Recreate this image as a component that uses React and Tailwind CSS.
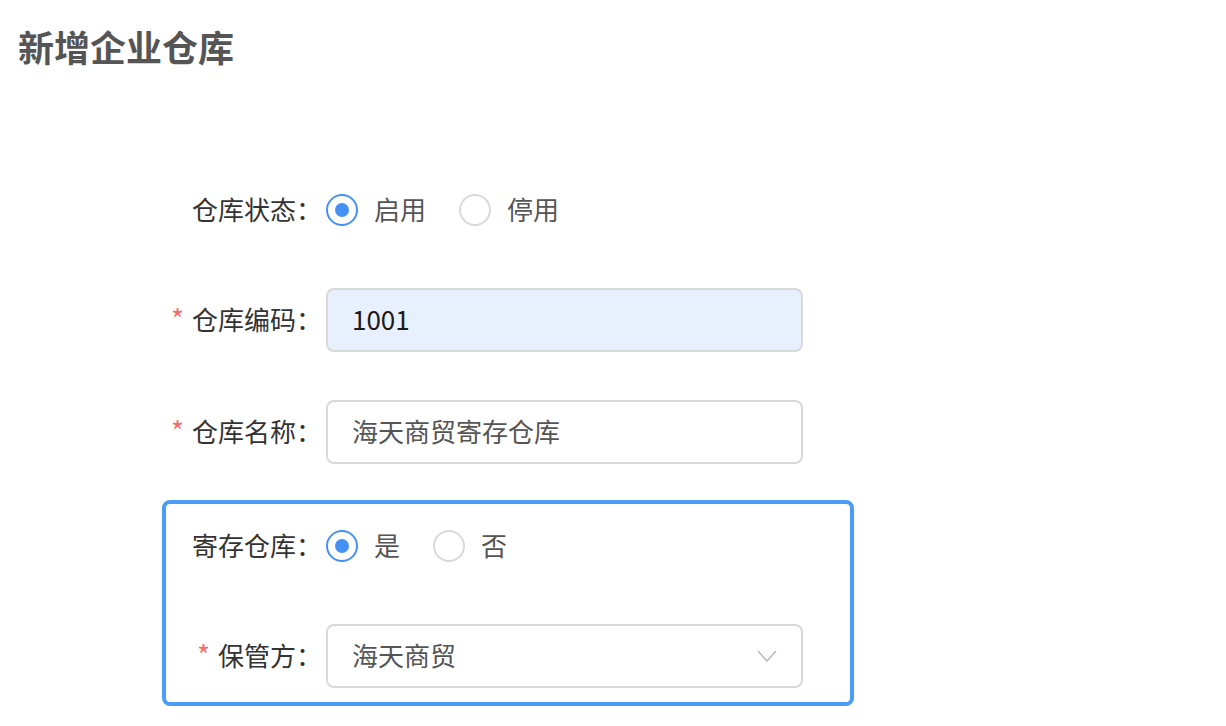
import { useState } from "react";

const font = { fontFamily: '"Noto Sans CJK SC", "Noto Sans", sans-serif' };

const Radio = ({ checked, label, onClick }) => (
  <button type="button" onClick={onClick} className="flex items-center mr-[33px]">
    <span
      className={`w-8 h-8 rounded-full border-2 flex items-center justify-center ${
        checked ? "border-[#4391f5]" : "border-[#d9d9d9]"
      }`}
    >
      {checked && <span className="w-[14px] h-[14px] rounded-full bg-[#4391f5]" />}
    </span>
    <span className="ml-4 pb-1 text-[26px] text-[#555]">{label}</span>
  </button>
);

const Label = ({ required, children, width = "w-[164px]" }) => (
  <div className={`${width} shrink-0 flex justify-end items-center pr-[4px] pb-1 text-[26px] text-[#333]`}>
    {required && <span className="text-[#f56c6c] text-[28px] mr-[8px]">*</span>}
    <span>{children}：</span>
  </div>
);

const App = () => {
  const [status, setStatus] = useState("on");
  const [deposit, setDeposit] = useState(true);

  return (
    <div className="w-[1226px] h-[726px] bg-white overflow-hidden" style={font}>
      <h1 className="pl-[18px] pt-[22px] text-[36px] leading-[48px] font-bold text-[#555]">新增企业仓库</h1>

      <div className="ml-[162px] w-[692px] mt-[108px]">
        {/* 仓库状态 */}
        <div className="flex h-16 items-center mb-[46px]">
          <Label>仓库状态</Label>
          <Radio checked={status === "on"} label="启用" onClick={() => setStatus("on")} />
          <Radio checked={status === "off"} label="停用" onClick={() => setStatus("off")} />
        </div>

        <div className="flex h-16 items-center mb-12">
          <Label required>仓库编码</Label>
          <div className="w-[477px] h-16 rounded-lg border-2 border-[#d9d9d9] bg-[#e8f0fe] flex items-center px-6 pb-1 text-[26px] text-[#1a1a1a]">
            1001
          </div>
        </div>

        <div className="flex h-16 items-center mb-9">
          <Label required>仓库名称</Label>
          <div className="w-[477px] h-16 rounded-lg border-2 border-[#d9d9d9] bg-white flex items-center px-6 pb-1 text-[26px] text-[#555]">
            海天商贸寄存仓库
          </div>
        </div>

        {/* 寄存仓库 */}
        <div className="border-4 border-[#4a9cf6] rounded-lg pt-[10px] pb-[14px]">
          <div className="flex h-16 items-center mb-[46px]">
            <Label width="w-[160px]">寄存仓库</Label>
            <Radio checked={deposit} label="是" onClick={() => setDeposit(true)} />
            <Radio checked={!deposit} label="否" onClick={() => setDeposit(false)} />
          </div>
          <div className="flex h-16 items-center">
            <Label required width="w-[160px]">保管方</Label>
            <div className="w-[477px] h-16 rounded-lg border-2 border-[#d9d9d9] bg-white flex items-center justify-between px-6 text-[26px] text-[#555]">
              <span className="pb-1">海天商贸</span>
              <svg width="20" height="12" viewBox="0 0 20 12" fill="none" stroke="#bbb" strokeWidth="1.6">
                <path d="M1 1 L10 11 L19 1" />
              </svg>
            </div>
          </div>
        </div>
      </div>
    </div>
  );
};

export default App;
